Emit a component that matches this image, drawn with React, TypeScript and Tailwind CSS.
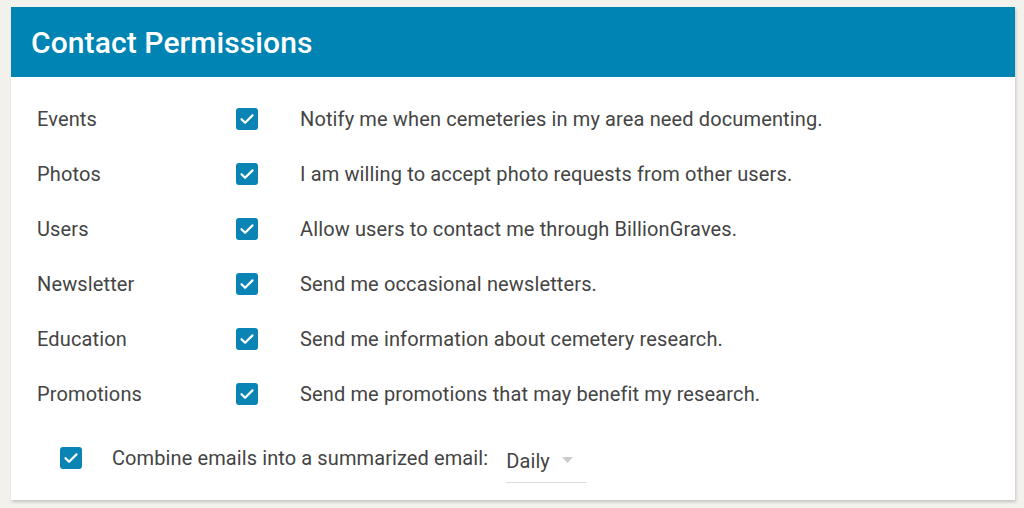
const rows = [
  { label: "Events", text: "Notify me when cemeteries in my area need documenting." },
  { label: "Photos", text: "I am willing to accept photo requests from other users." },
  { label: "Users", text: "Allow users to contact me through BillionGraves." },
  { label: "Newsletter", text: "Send me occasional newsletters." },
  { label: "Education", text: "Send me information about cemetery research." },
  { label: "Promotions", text: "Send me promotions that may benefit my research." },
];

const CheckBox = () => (
  <span className="flex h-[22px] w-[22px] shrink-0 items-center justify-center rounded-[3px] bg-[#0a84b4]">
    <svg width="16" height="16" viewBox="0 0 16 16" fill="none">
      <path d="M2.5 8.2l3.6 3.6 7.4-7.4" stroke="white" strokeWidth="2.2" strokeLinecap="round" strokeLinejoin="round" />
    </svg>
  </span>
);

export default function App() {
  return (
    <div className="h-[508px] w-[1024px] bg-[#f3f1ec] pl-[11px] pr-[9px] pt-[7px] font-['Roboto',sans-serif]">
      <div className="h-[493px] bg-white shadow-[1px_2px_3px_rgba(0,0,0,0.18)]">
        <div className="flex h-[70px] items-center bg-[#0084b4] px-[20px]">
          <h1 className="text-[30px] font-medium tracking-[0.1px] text-white">Contact Permissions</h1>
        </div>
        <div className="pt-[14px]">
          {rows.map((r) => (
            <div key={r.label} className="flex h-[55px] items-center pl-[26px] text-[20px] tracking-[0.13px] text-[#444]">
              <span className="w-[199px]">{r.label}</span>
              <CheckBox />
              <span className="ml-[42px]">{r.text}</span>
            </div>
          ))}
          <div className="flex h-[55px] items-center pl-[49px] pt-[19px] text-[20px] tracking-[0.1px] text-[#444]">
            <CheckBox />
            <span className="ml-[30px]">Combine emails into a summarized email:</span>
            <div className="relative ml-[18px] flex h-[50px] w-[81px] items-center border-b border-[#ddd] pt-[6px]">
              <span>Daily</span>
              <svg className="absolute left-[56px] top-[24px]" width="11" height="6" viewBox="0 0 11 6">
                <path d="M0 0h11L5.5 6z" fill="#ccc" />
              </svg>
            </div>
          </div>
        </div>
      </div>
    </div>
  );
}
